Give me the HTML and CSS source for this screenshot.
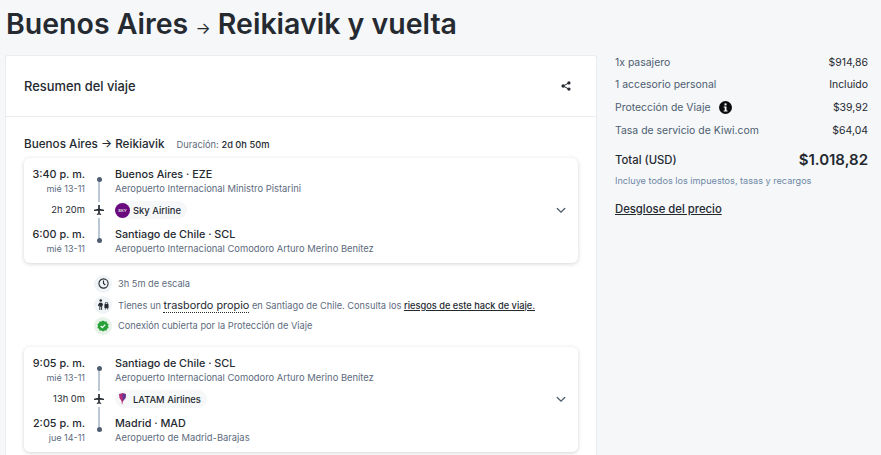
FILE: index.html
```html
<!DOCTYPE html>
<html lang="es">
<head>
    <meta charset="UTF-8">
    <title>Buenos Aires - Reikiavik y vuelta</title>
    <link rel="stylesheet" href="styles.css">
</head>
<body>
    <h1 class="page-title">Buenos Aires <span class="title-arrow">→</span> Reikiavik y vuelta</h1>

    <div class="columns">
        <!-- Trip summary -->
        <main class="summary-card">
            <div class="summary-head">
                <h2>Resumen del viaje</h2>
                <svg class="share-icon" width="10" height="10" viewBox="0 0 12 12">
                    <path d="M9.500 2.300 2.500 6l7 3.700" fill="none" stroke="#252a31" stroke-width="1.200"/>
                    <circle cx="9.500" cy="2.300" r="2" fill="#252a31"/>
                    <circle cx="2.500" cy="6" r="2" fill="#252a31"/>
                    <circle cx="9.500" cy="9.700" r="2" fill="#252a31"/>
                </svg>
            </div>

            <div class="summary-body">
                <div class="route-title">
                    <strong>Buenos Aires → Reikiavik</strong>
                    <span class="duration">Duración: <b>2d 0h 50m</b></span>
                </div>

                <!-- First leg -->
                <div class="leg">
                    <div class="leg-times">
                        <div class="time-block">
                            <div class="time">3:40 p. m.</div>
                            <div class="date">mié 13-11</div>
                        </div>
                        <div class="leg-length">2h 20m</div>
                        <div class="time-block">
                            <div class="time">6:00 p. m.</div>
                            <div class="date">mié 13-11</div>
                        </div>
                    </div>
                    <div class="leg-line">
                        <span class="dot"></span>
                        <span class="bar"></span>
                        <svg class="plane" width="10" height="10" viewBox="0 0 12 12"><path d="M5 0h2v4.400L12 5.600v1.600L7 6.800v3l1.600 1V12L6 11.300 3.400 12v-1.200l1.600-1v-3L0 7.200V5.600l5-1.200z" fill="#252a31"/></svg>
                        <span class="bar"></span>
                        <span class="dot"></span>
                    </div>
                    <div class="leg-places">
                        <div class="place">
                            <div class="place-name">Buenos Aires · EZE</div>
                            <div class="airport">Aeropuerto Internacional Ministro Pistarini</div>
                        </div>
                        <div class="carrier">
                            <span class="carrier-logo sky">SKY</span>
                            Sky Airline
                        </div>
                        <div class="place">
                            <div class="place-name">Santiago de Chile · SCL</div>
                            <div class="airport">Aeropuerto Internacional Comodoro Arturo Merino Benítez</div>
                        </div>
                    </div>
                    <svg class="chevron" width="10" height="7" viewBox="0 0 12 8"><path d="M1.500 1.500 6 6l4.500-4.500" fill="none" stroke="#4f5e71" stroke-width="1.600" stroke-linecap="round"/></svg>
                </div>

                <!-- Layover notes -->
                <ul class="notes">
                    <li>
                        <span class="note-icon">
                            <svg width="11" height="11" viewBox="0 0 12 12"><circle cx="6" cy="6" r="5" fill="none" stroke="#252a31" stroke-width="1.200"/><path d="M6 2.800V6l2 1.600" fill="none" stroke="#252a31" stroke-width="1.200"/></svg>
                        </span>
                        3h 5m de escala
                    </li>
                    <li>
                        <span class="note-icon">
                            <svg width="11" height="11" viewBox="0 0 12 12"><circle cx="3" cy="1.600" r="1.400" fill="#252a31"/><path d="M1.500 4h3l1.200 3H4.500v5h-1V8.500h-1V12h-1V7L0 8V6.500z" fill="#252a31"/><rect x="7" y="5.500" width="4.500" height="4.500" rx=".8" fill="#252a31"/><path d="M8 5.500V4h2.500v1.500M8 10v1.500M10.500 10v1.500" fill="none" stroke="#252a31" stroke-width=".8"/></svg>
                        </span>
                        <span>Tienes un <span class="dotted">trasbordo propio</span> en Santiago de Chile. Consulta los <a class="risk-link">riesgos de este hack de viaje.</a></span>
                    </li>
                    <li>
                        <span class="note-icon covered">
                            <svg width="12" height="12" viewBox="0 0 12 12"><path d="M6 .4l1.600 1.100 1.900-.1.600 1.800 1.500 1.100L11 6l.6 1.700-1.500 1.100-.6 1.800-1.900-.1L6 11.600l-1.600-1.100-1.900.1-.6-1.800L.4 7.700 1 6 .4 4.300l1.500-1.100.6-1.800 1.900.1z" fill="#28a138"/><path d="M3.700 6l1.600 1.600 3-3" fill="none" stroke="#fff" stroke-width="1.200"/></svg>
                        </span>
                        Conexión cubierta por la Protección de Viaje
                    </li>
                </ul>

                <!-- Second leg -->
                <div class="leg">
                    <div class="leg-times">
                        <div class="time-block">
                            <div class="time">9:05 p. m.</div>
                            <div class="date">mié 13-11</div>
                        </div>
                        <div class="leg-length">13h 0m</div>
                        <div class="time-block">
                            <div class="time">2:05 p. m.</div>
                            <div class="date">jue 14-11</div>
                        </div>
                    </div>
                    <div class="leg-line">
                        <span class="dot"></span>
                        <span class="bar"></span>
                        <svg class="plane" width="10" height="10" viewBox="0 0 12 12"><path d="M5 0h2v4.400L12 5.600v1.600L7 6.800v3l1.600 1V12L6 11.300 3.400 12v-1.200l1.600-1v-3L0 7.200V5.600l5-1.200z" fill="#252a31"/></svg>
                        <span class="bar"></span>
                        <span class="dot"></span>
                    </div>
                    <div class="leg-places">
                        <div class="place">
                            <div class="place-name">Santiago de Chile · SCL</div>
                            <div class="airport">Aeropuerto Internacional Comodoro Arturo Merino Benítez</div>
                        </div>
                        <div class="carrier">
                            <span class="carrier-logo">
                                <svg width="9" height="14" viewBox="0 0 9 14"><path d="M1 2 5 1l3 1-.5 4L5 9 4 13 3.500 9 1.500 6z" fill="#b02a78"/><path d="M4.500 2 8 2 7.500 6 5 9z" fill="#5a3a94"/></svg>
                            </span>
                            LATAM Airlines
                        </div>
                        <div class="place">
                            <div class="place-name">Madrid · MAD</div>
                            <div class="airport">Aeropuerto de Madrid-Barajas</div>
                        </div>
                    </div>
                    <svg class="chevron" width="10" height="7" viewBox="0 0 12 8"><path d="M1.500 1.500 6 6l4.500-4.500" fill="none" stroke="#4f5e71" stroke-width="1.600" stroke-linecap="round"/></svg>
                </div>
            </div>
        </main>

        <!-- Price -->
        <aside class="price">
            <div class="price-row"><span>1x pasajero</span><span class="amount">$914,86</span></div>
            <div class="price-row"><span>1 accesorio personal</span><span class="amount">Incluido</span></div>
            <div class="price-row">
                <span class="with-info">Protección de Viaje
                    <svg width="13" height="13" viewBox="0 0 13 13"><circle cx="6.500" cy="6.500" r="6.500" fill="#0b0c0e"/><rect x="5.500" y="2.400" width="2" height="2" fill="#fff"/><path d="M4.700 5.400h2.800v4h1v1.200H4.700V9.400h1V6.600h-1z" fill="#fff"/></svg>
                </span>
                <span class="amount">$39,92</span>
            </div>
            <div class="price-row"><span>Tasa de servicio de Kiwi.com</span><span class="amount">$64,04</span></div>
            <div class="total-row">
                <span class="total-label">Total (USD)</span>
                <span class="total-value">$1.018,82</span>
            </div>
            <p class="taxes">Incluye todos los impuestos, tasas y recargos</p>
            <a class="breakdown">Desglose del precio</a>
        </aside>
    </div>
</body>
</html>
```

FILE: styles.css
```css
html, body {
    height: 455px;
    overflow: hidden;
}

body {
    margin: 0;
    background-color: #f5f7f9;
    color: #252a31;
    font-family: Inter, "Noto Sans", sans-serif;
}

.page-title {
    margin: 0;
    padding: 6px 0 0 6px;
    height: 55px;
    box-sizing: border-box;
    font-size: 28.500px;
    line-height: 36px;
    font-weight: 600;
}

.title-arrow {
    font-size: 16px;
    font-weight: 400;
}

.columns {
    display: flex;
    align-items: flex-start;
    height: 400px;
    padding-left: 5px;
}

/* Left card, it continues below the fold */
.summary-card {
    width: 592px;
    height: 400px;
    box-sizing: border-box;
    overflow: hidden;
    background-color: #fff;
    border: 1px solid #e8edf1;
    border-bottom: none;
    border-radius: 3px 3px 0 0;
}

.summary-head {
    display: flex;
    justify-content: space-between;
    align-items: center;
    height: 60px;
    padding: 0 25px 0 18px;
    border-bottom: 1px solid #e8edf1;
}

.summary-head h2 {
    margin: 0;
    font-size: 12.900px;
    font-weight: 500;
}

.summary-body {
    padding: 20px 18px 0;
}

.route-title {
    display: flex;
    align-items: baseline;
    gap: 12px;
    height: 21px;
    font-size: 11.700px;
}

.route-title strong {
    font-weight: 500;
}

.duration {
    font-size: 9.300px;
    color: #5d6b7d;
}

.duration b {
    font-weight: 500;
    color: #252a31;
}

/* Flight leg cards */
.leg {
    display: flex;
    align-items: stretch;
    position: relative;
    height: 105px;
    box-sizing: border-box;
    padding: 9px 0 0;
    background-color: #fff;
    border-radius: 6px;
    box-shadow: 0 1px 4px rgba(37, 42, 49, 0.2);
}

.leg-times {
    display: flex;
    flex-direction: column;
    justify-content: space-between;
    width: 61px;
    height: 88px;
    padding-left: 2px;
    box-sizing: border-box;
    text-align: right;
}

.time {
    font-size: 10.800px;
    line-height: 15px;
    font-weight: 500;
}

.date {
    font-size: 9px;
    line-height: 13px;
    color: #5d6b7d;
}

.leg-length {
    margin-bottom: 2px;
    font-size: 9.400px;
    line-height: 14px;
}

.leg-line {
    display: flex;
    flex-direction: column;
    align-items: center;
    width: 28px;
    height: 76px;
    padding-top: 10px;
    box-sizing: border-box;
}

.dot {
    width: 5px;
    height: 5px;
    flex: none;
    border-radius: 50%;
    background-color: #4f5e71;
}

.bar {
    flex: 1;
    width: 2px;
    background-color: #bac7d5;
}

.plane {
    flex: none;
    margin: 3px 0;
}

.leg-places {
    display: flex;
    flex-direction: column;
    justify-content: space-between;
    height: 88px;
    margin-left: 2px;
}

.place-name {
    font-size: 10.800px;
    line-height: 15px;
    font-weight: 500;
}

.airport {
    font-size: 9.400px;
    line-height: 13px;
    color: #5d6b7d;
}

.carrier {
    display: flex;
    align-items: center;
    align-self: flex-start;
    gap: 3px;
    height: 18px;
    margin-bottom: 2px;
    padding-right: 6px;
    border-radius: 9px;
    background-color: #f5f7f9;
    font-size: 9.400px;
    font-weight: 500;
}

.carrier-logo {
    display: flex;
    align-items: center;
    justify-content: center;
    width: 15px;
    height: 15px;
    border-radius: 50%;
    font-size: 4px;
    font-weight: 700;
    color: #ddd;
}

.carrier-logo.sky {
    background-color: #690a7e;
}

.chevron {
    position: absolute;
    right: 12px;
    top: 49px;
}

/* Notes between legs */
.notes {
    margin: 0;
    padding: 10px 0 0 70px;
    height: 84px;
    box-sizing: border-box;
    list-style: none;
    font-size: 9.250px;
    color: #5d6b7d;
}

.notes li {
    display: flex;
    align-items: center;
    gap: 6px;
    height: 21px;
}

.note-icon {
    display: flex;
    align-items: center;
    justify-content: center;
    width: 18px;
    height: 18px;
    flex: none;
    border-radius: 50%;
    background-color: #f1f4f7;
}

.note-icon.covered {
    background-color: #e7f3e8;
}

.dotted {
    color: #252a31;
    font-size: 10.900px;
    border-bottom: 1px dotted #252a31;
}

.risk-link {
    color: #252a31;
    font-weight: 500;
    text-decoration: underline;
}

/* Price column */
.price {
    width: 253px;
    margin-top: -4px;
    margin-left: 18px;
    font-size: 10.450px;
    color: #4f5e71;
}

.price-row {
    display: flex;
    justify-content: space-between;
    align-items: center;
    height: 22.670px;
}

.with-info {
    display: flex;
    align-items: center;
    gap: 8px;
}

.amount {
    color: #252a31;
}

.total-row {
    display: flex;
    justify-content: space-between;
    align-items: center;
    height: 30px;
    margin-top: 3px;
}

.total-label {
    font-size: 11.300px;
    font-weight: 500;
    color: #252a31;
}

.total-value {
    font-size: 15px;
    font-weight: 600;
    color: #252a31;
}

.taxes {
    margin: 0;
    font-size: 9.150px;
    line-height: 12px;
    color: #6f87a5;
}

.breakdown {
    display: inline-block;
    margin-top: 15px;
    font-size: 11.300px;
    font-weight: 500;
    color: #252a31;
    text-decoration: underline;
}
```
